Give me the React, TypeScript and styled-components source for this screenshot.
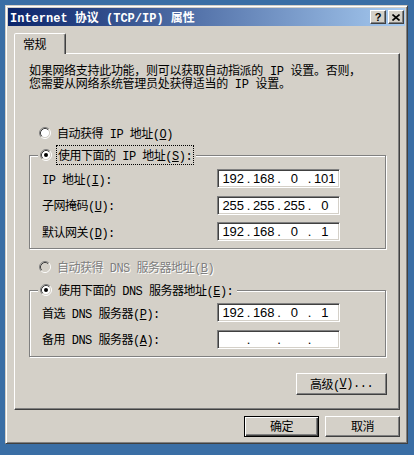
import styled, { createGlobalStyle } from "styled-components";

const GlobalStyle = createGlobalStyle`
  html, body {
    margin: 0;
    padding: 0;
    background: #3a6ea5;
  }
  body {
    font-family: "Liberation Mono", "Noto Sans CJK SC", monospace;
    font-size: 12px;
    letter-spacing: -0.5px;
    color: #000;
  }
`;

const Window = styled.div`
  box-sizing: border-box;
  width: 403px;
  margin: 5px 0 0 5px;
  padding: 2px;
  background: #d4d0c8;
  border: 1px solid;
  border-color: #d4d0c8 #404040 #404040 #d4d0c8;
  box-shadow: inset 1px 1px 0 #fff, inset -1px -1px 0 #808080;
  display: flex;
  flex-direction: column;
`;

const TitleBar = styled.div`
  height: 18px;
  display: flex;
  align-items: center;
  padding: 0 1px 0 2px;
  background: linear-gradient(to right, #0a246a, #a6caf0);
`;

const TitleText = styled.div`
  flex: 1;
  color: #fff;
  font-weight: bold;
  letter-spacing: 0;
  white-space: nowrap;
`;

const TitleButton = styled.div<{ $gap?: number }>`
  box-sizing: border-box;
  width: 16px;
  height: 14px;
  margin-left: ${(p) => p.$gap ?? 0}px;
  display: flex;
  align-items: center;
  justify-content: center;
  background: #d4d0c8;
  border: 1px solid;
  border-color: #fff #404040 #404040 #fff;
  box-shadow: inset -1px -1px 0 #808080;
  font-family: "Liberation Sans", sans-serif;
  font-weight: bold;
  font-size: 11px;
  letter-spacing: 0;
  line-height: 1;
`;

const Content = styled.div`
  padding: 7px 5px 4px 6px;
  display: flex;
  flex-direction: column;
`;

const TabStrip = styled.div`
  display: flex;
  height: 21px;
  margin-bottom: -1px;
  position: relative;
  z-index: 1;
`;

const Tab = styled.div`
  box-sizing: border-box;
  width: 52px;
  height: 21px;
  display: flex;
  align-items: center;
  padding-left: 8px;
  background: #d4d0c8;
  border: 1px solid;
  border-bottom: none;
  border-color: #fff #404040 transparent #fff;
  border-radius: 2px 2px 0 0;
  box-shadow: inset -1px 0 0 #808080;
`;

const Panel = styled.div`
  display: flex;
  flex-direction: column;
  padding: 11.5px 13px 14px 14px;
  border: 1px solid;
  border-color: #fff #404040 #404040 #fff;
  box-shadow: inset -1px -1px 0 #808080;
`;

const Description = styled.p`
  margin: 0;
  line-height: 13px;
  letter-spacing: -0.3px;
  white-space: nowrap;
`;

const RadioRow = styled.div<{ $top: number; $disabled?: boolean }>`
  display: flex;
  align-items: center;
  gap: 6px;
  height: 16px;
  margin: ${(p) => p.$top}px 0 0 10px;
  color: ${(p) => (p.$disabled ? "#808080" : "#000")};
  text-shadow: ${(p) => (p.$disabled ? "1px 1px 0 #fff" : "none")};
  white-space: nowrap;
`;

const GroupBox = styled.div<{ $top: number }>`
  margin-top: ${(p) => p.$top}px;
  padding: 0 0 7px 12px;
  border: 1px solid #808080;
  box-shadow: inset 1px 1px 0 #fff, 1px 1px 0 #fff;
`;

const Legend = styled.div`
  display: flex;
  align-items: center;
  gap: 5px;
  width: fit-content;
  height: 16px;
  margin: -9px 0 0 -4px;
  padding: 0 3px 0 2px;
  background: #d4d0c8;
  white-space: nowrap;
`;

const FocusText = styled.span<{ $focused?: boolean }>`
  padding: 0 1px;
  outline: ${(p) => (p.$focused ? "1px dotted #000" : "none")};
  outline-offset: 0;
`;

const Rows = styled.div<{ $top: number }>`
  display: flex;
  flex-direction: column;
  gap: 7.5px;
  margin-top: ${(p) => p.$top}px;
`;

const FieldRow = styled.div`
  display: grid;
  grid-template-columns: 175px 123px;
  align-items: center;
  height: 19px;
  white-space: nowrap;
`;

const IpBox = styled.div`
  box-sizing: border-box;
  height: 19px;
  display: flex;
  align-items: center;
  padding: 0 1px 0 2px;
  background: #fff;
  border: 1px solid;
  border-color: #808080 #fff #fff #808080;
  box-shadow: inset 1px 1px 0 #404040, inset -1px -1px 0 #d4d0c8;
  font-family: "Liberation Sans", Arial, sans-serif;
  font-size: 13px;
  letter-spacing: 0;
`;

const IpField = styled.span`
  flex: 1;
  text-align: center;
`;

const IpDot = styled.span`
  width: 4px;
  text-align: center;
`;

const Button = styled.div<{ $default?: boolean; $width: number; $height: number }>`
  box-sizing: border-box;
  width: ${(p) => p.$width}px;
  height: ${(p) => p.$height}px;
  display: flex;
  align-items: center;
  justify-content: center;
  background: #d4d0c8;
  border: 1px solid;
  border-color: ${(p) =>
    p.$default ? "#000" : "#fff #404040 #404040 #fff"};
  box-shadow: ${(p) =>
    p.$default
      ? "inset 1px 1px 0 #fff, inset -1px -1px 0 #404040, inset -2px -2px 0 #808080"
      : "inset -1px -1px 0 #808080"};
  white-space: nowrap;
`;

const AdvancedButton = styled(Button)`
  align-self: flex-end;
  margin: 16px -1px 0 0;
`;

const ButtonRow = styled.div`
  display: flex;
  justify-content: flex-end;
  gap: 6px;
  margin-top: 6px;
`;

function Radio({ checked, disabled }: { checked?: boolean; disabled?: boolean }) {
  return (
    <svg width="12" height="12" viewBox="0 0 12 12" style={{ flex: "none" }}>
      <circle cx="6" cy="6" r="4.5" fill={disabled ? "#d4d0c8" : "#fff"} />
      <path d="M2.11 9.89 A5.5 5.5 0 0 1 9.89 2.11" stroke="#808080" fill="none" />
      <path d="M9.89 2.11 A5.5 5.5 0 0 1 2.11 9.89" stroke="#fff" fill="none" />
      <path d="M2.82 9.18 A4.5 4.5 0 0 1 9.18 2.82" stroke="#404040" fill="none" />
      <path d="M9.18 2.82 A4.5 4.5 0 0 1 2.82 9.18" stroke="#d4d0c8" fill="none" />
      {checked && <circle cx="6" cy="6" r="2" fill={disabled ? "#808080" : "#000"} />}
    </svg>
  );
}

function Label({ text, mnemonic }: { text: string; mnemonic: string }) {
  return (
    <span>
      {text}(<u>{mnemonic}</u>):
    </span>
  );
}

function IpAddress({ parts }: { parts: string[] }) {
  return (
    <IpBox>
      {parts.map((part, i) => (
        <>
          {i > 0 && <IpDot key={"d" + i}>.</IpDot>}
          <IpField key={"f" + i}>{part}</IpField>
        </>
      ))}
    </IpBox>
  );
}

const ipRows = [
  { text: "IP 地址", key: "I", parts: ["192", "168", "0", "101"] },
  { text: "子网掩码", key: "U", parts: ["255", "255", "255", "0"] },
  { text: "默认网关", key: "D", parts: ["192", "168", "0", "1"] },
];

const dnsRows = [
  { text: "首选 DNS 服务器", key: "P", parts: ["192", "168", "0", "1"] },
  { text: "备用 DNS 服务器", key: "A", parts: ["", "", "", ""] },
];

export default function App() {
  return (
    <>
      <GlobalStyle />
      <Window>
        <TitleBar>
          <TitleText>Internet 协议 (TCP/IP) 属性</TitleText>
          <TitleButton>?</TitleButton>
          <TitleButton $gap={2}>
            <svg width="8" height="7" viewBox="0 0 8 7">
              <path d="M0.5 0.5 L7.5 6.5 M7.5 0.5 L0.5 6.5" stroke="#000" strokeWidth="1.6" />
            </svg>
          </TitleButton>
        </TitleBar>
        <Content>
          <TabStrip>
            <Tab>常规</Tab>
          </TabStrip>
          <Panel>
            <Description>
              如果网络支持此功能，则可以获取自动指派的 IP 设置。否则，
              <br />
              您需要从网络系统管理员处获得适当的 IP 设置。
            </Description>

            <RadioRow $top={33.5}>
              <Radio />
              <span>
                自动获得 IP 地址(<u>O</u>)
              </span>
            </RadioRow>

            <GroupBox $top={14}>
              <Legend>
                <Radio checked />
                <FocusText $focused>
                  使用下面的 IP 地址(<u>S</u>):
                </FocusText>
              </Legend>
              <Rows $top={6}>
                {ipRows.map((row) => (
                  <FieldRow key={row.key}>
                    <Label text={row.text} mnemonic={row.key} />
                    <IpAddress parts={row.parts} />
                  </FieldRow>
                ))}
              </Rows>
            </GroupBox>

            <RadioRow $top={10} $disabled>
              <Radio disabled />
              <span>
                自动获得 DNS 服务器地址(<u>B</u>)
              </span>
            </RadioRow>

            <GroupBox $top={15}>
              <Legend>
                <Radio checked />
                <FocusText>
                  使用下面的 DNS 服务器地址(<u>E</u>):
                </FocusText>
              </Legend>
              <Rows $top={5}>
                {dnsRows.map((row) => (
                  <FieldRow key={row.key}>
                    <Label text={row.text} mnemonic={row.key} />
                    <IpAddress parts={row.parts} />
                  </FieldRow>
                ))}
              </Rows>
            </GroupBox>

            <AdvancedButton $width={91} $height={22}>
              高级(<u>V</u>)...
            </AdvancedButton>
          </Panel>
          <ButtonRow>
            <Button $default $width={75} $height={21}>
              确定
            </Button>
            <Button $width={75} $height={21}>
              取消
            </Button>
          </ButtonRow>
        </Content>
      </Window>
    </>
  );
}
